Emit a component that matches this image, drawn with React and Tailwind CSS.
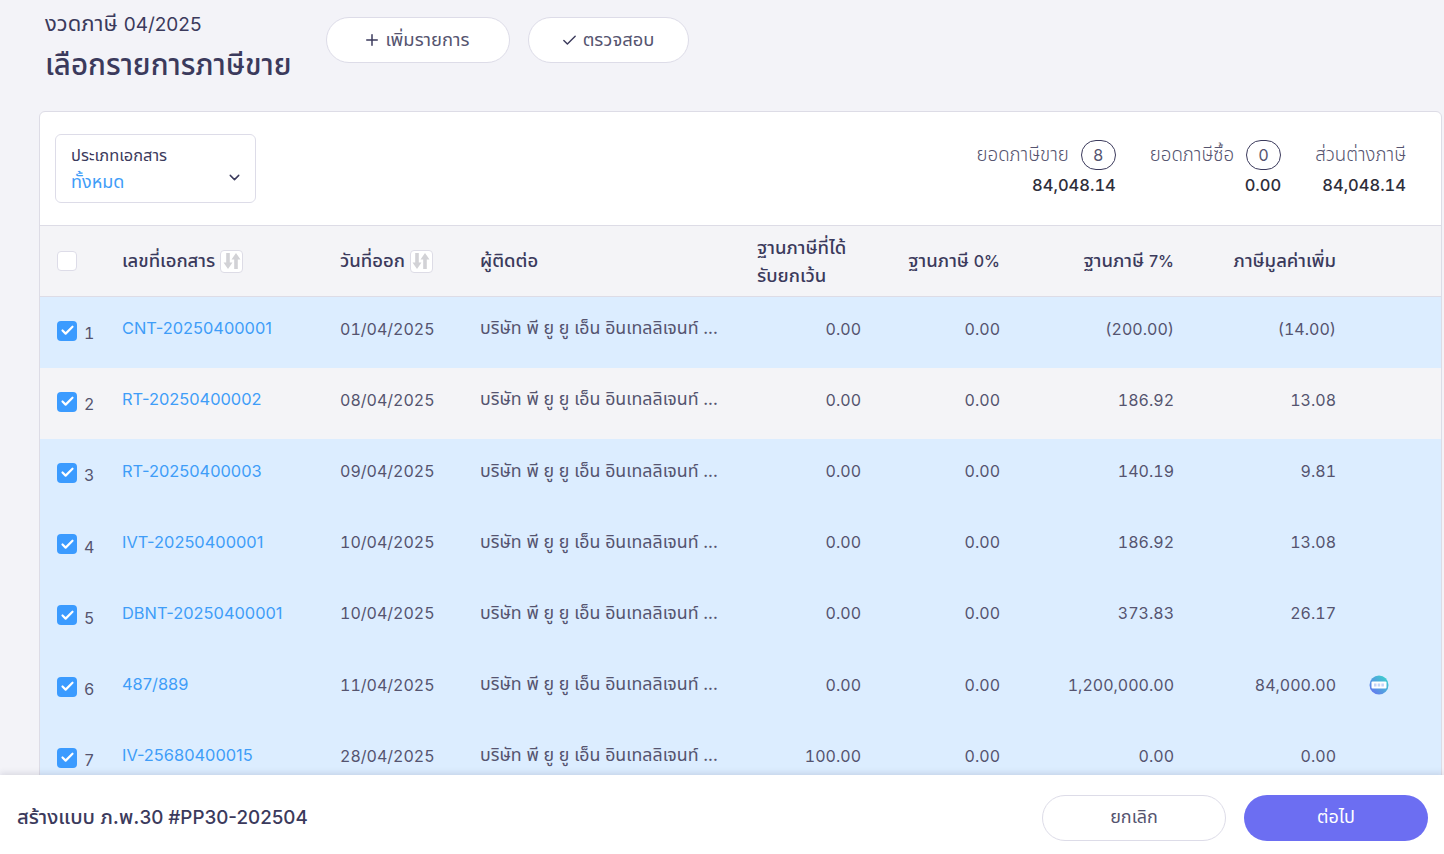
import { Check, ChevronDown, Plus } from "lucide-react";

const FONT = "font-['Inter','Noto_Sans_Thai',sans-serif]";
const COLS = "grid grid-cols-[82px_218px_140px_277px_104px_139px_174px_162px_1fr]";
const CONTACT = "บริษัท พี ยู ยู เอ็น อินเทลลิเจนท์ ...";

const rows = [
    { no: 1, doc: "CNT-20250400001", date: "01/04/2025", exempt: "0.00", zero: "0.00", base: "(200.00)", vat: "(14.00)", on: true },
    { no: 2, doc: "RT-20250400002", date: "08/04/2025", exempt: "0.00", zero: "0.00", base: "186.92", vat: "13.08", on: false },
    { no: 3, doc: "RT-20250400003", date: "09/04/2025", exempt: "0.00", zero: "0.00", base: "140.19", vat: "9.81", on: true },
    { no: 4, doc: "IVT-20250400001", date: "10/04/2025", exempt: "0.00", zero: "0.00", base: "186.92", vat: "13.08", on: true },
    { no: 5, doc: "DBNT-20250400001", date: "10/04/2025", exempt: "0.00", zero: "0.00", base: "373.83", vat: "26.17", on: true },
    { no: 6, doc: "487/889", date: "11/04/2025", exempt: "0.00", zero: "0.00", base: "1,200,000.00", vat: "84,000.00", on: true, badge: true },
    { no: 7, doc: "IV-25680400015", date: "28/04/2025", exempt: "100.00", zero: "0.00", base: "0.00", vat: "0.00", on: true },
];

const SortIcon = () => (
    <span className="ml-[5px] flex h-[23px] w-[23px] shrink-0 items-center justify-center rounded-[4px] border border-[#dddce6] bg-white">
        <svg width="18" height="16" viewBox="0 0 18 16" fill="#d2d2d6">
            <path d="M3.2 0h3.600v9.500H9.500L5 16 .5 9.500h2.700z" />
            <path d="M11.200 16h3.600V6.500h2.700L13 0 8.500 6.500h2.700z" />
        </svg>
    </span>
);

const Badge = () => (
    <svg width="20" height="20" viewBox="0 0 20 20">
        <defs>
            <linearGradient id="badgeFill" x1="0" y1="1" x2="1" y2="0">
                <stop offset="0" stopColor="#6a6cf4" />
                <stop offset="1" stopColor="#38dcc8" />
            </linearGradient>
        </defs>
        <circle cx="10" cy="10" r="9.500" fill="url(#badgeFill)" />
        <rect x="2.500" y="6.500" width="15" height="7" rx="1" fill="#fff" />
        <rect x="5" y="8.500" width="2.500" height="3" fill="#c4d4f8" />
        <rect x="8.700" y="8.500" width="2.500" height="3" fill="#c4d4f8" />
        <rect x="12.400" y="8.500" width="2.500" height="3" fill="#c4d4f8" />
    </svg>
);

const Counter = ({ value }) => (
    <span className="flex h-[30px] w-[35px] items-center justify-center rounded-full border border-[#3b3a5c] text-[16px] text-[#55546f]">
        {value}
    </span>
);

const Row = ({ r }) => (
    <div className={`${COLS} h-[71.2px] items-center pb-[8px] text-[16px] tabular-nums text-[#55546f] ${r.on ? "bg-[#dcedff]" : "bg-[#f4f4f7]"}`}>
        <div className="flex items-center pl-[17px] pt-[4px]">
            <span className="flex h-5 w-5 items-center justify-center rounded-[4px] bg-[#3b9bff]">
                <Check size={15} strokeWidth={3.5} className="text-white" />
            </span>
            <span className="ml-[7px] pt-[5px]">{r.no}</span>
        </div>
        <div className="text-[16.4px] text-[#3f9df8] [font-variant-numeric:normal]">{r.doc}</div>
        <div>{r.date}</div>
        <div className="whitespace-nowrap text-[17.8px]">{CONTACT}</div>
        <div className="text-right">{r.exempt}</div>
        <div className="text-right">{r.zero}</div>
        <div className="text-right">{r.base}</div>
        <div className="text-right">{r.vat}</div>
        <div className="pl-[33px]">{r.badge && <Badge />}</div>
    </div>
);

const App = () => {
    return (
        <div className={`${FONT} flex h-[854px] w-[1444px] flex-col overflow-hidden bg-[#f3f3f8] text-[#3b3a5c]`}>
            <div className="min-h-0 flex-1 overflow-hidden">
                {/* page head */}
                <div className="flex h-[111px] items-start pl-[45px]">
                    <div className="w-[281px]">
                        <div className="pt-[9px] text-[22px] leading-[28px]">งวดภาษี <span className="text-[19px]">04/2025</span></div>
                        <h1 className="mt-[5px] text-[29.5px] font-medium leading-[40px]">เลือกรายการภาษีขาย</h1>
                    </div>
                    <div className="mt-[17px] flex gap-[18px]">
                        <button className="flex h-[46px] w-[184px] items-center justify-center gap-[5px] rounded-full border border-[#dddce8] bg-white pr-[4px] text-[18.4px] text-[#55546f]">
                            <Plus size={18} strokeWidth={2} className="text-[#3b3a5c]" />
                            เพิ่มรายการ
                        </button>
                        <button className="flex h-[46px] w-[161px] items-center justify-center gap-[5px] rounded-full border border-[#dddce8] bg-white pr-[2px] text-[18.4px] text-[#55546f]">
                            <Check size={17} strokeWidth={2} className="text-[#3b3a5c]" />
                            ตรวจสอบ
                        </button>
                    </div>
                </div>

                {/* card */}
                <div className="ml-[39px] w-[1403px] overflow-hidden rounded-t-[6px] border border-[#dddce6] bg-white">
                    <div className="flex h-[113px] items-start justify-between pl-[15px] pr-[35px] pt-[22px]">
                        <div className="relative h-[69px] w-[201px] rounded-[6px] border border-[#dddce8] pl-[15px] pt-[9px]">
                            <div className="text-[16.4px] leading-[22px]">ประเภทเอกสาร</div>
                            <div className="mt-[4px] text-[18px] leading-[24px] text-[#3f9df8]">ทั้งหมด</div>
                            <ChevronDown size={17} className="absolute right-[12px] top-[34px]" />
                        </div>
                        <div className="flex items-start gap-[34px] pt-[6px]">
                            <div className="flex flex-col items-end">
                                <div className="flex items-center gap-3 text-[#55546f]">
                                    <span className="text-[18.7px] font-light">ยอดภาษีขาย</span>
                                    <Counter value="8" />
                                </div>
                                <div className="mt-[3px] text-[16.5px] font-medium tabular-nums leading-[24px] text-[#2e2e3a]">84,048.14</div>
                            </div>
                            <div className="flex flex-col items-end">
                                <div className="flex items-center gap-3 text-[#55546f]">
                                    <span className="text-[18.7px] font-light">ยอดภาษีซื้อ</span>
                                    <Counter value="0" />
                                </div>
                                <div className="mt-[3px] text-[16.5px] font-medium tabular-nums leading-[24px] text-[#2e2e3a]">0.00</div>
                            </div>
                            <div className="flex flex-col items-end">
                                <div className="flex h-[30px] items-center text-[18.7px] font-light text-[#55546f]">ส่วนต่างภาษี</div>
                                <div className="mt-[3px] text-[16.5px] font-medium tabular-nums leading-[24px] text-[#2e2e3a]">84,048.14</div>
                            </div>
                        </div>
                    </div>

                    {/* table head */}
                    <div className={`${COLS} h-[72px] items-center border-y border-[#dddce6] bg-[#f4f4f7] text-[18.5px] font-medium`}>
                        <div className="pl-[17px]">
                            <span className="block h-5 w-5 rounded-[4px] border border-[#dddce8] bg-white" />
                        </div>
                        <div className="flex items-center">เลขที่เอกสาร<SortIcon /></div>
                        <div className="flex items-center">วันที่ออก<SortIcon /></div>
                        <div>ผู้ติดต่อ</div>
                        <div className="whitespace-nowrap leading-[28px]">ฐานภาษีที่ได้<br />รับยกเว้น</div>
                        <div className="text-right">ฐานภาษี <span className="text-[16px]">0%</span></div>
                        <div className="text-right">ฐานภาษี <span className="text-[16px]">7%</span></div>
                        <div className="text-right">ภาษีมูลค่าเพิ่ม</div>
                        <div />
                    </div>

                    {rows.map((r) => (
                        <Row key={r.no} r={r} />
                    ))}
                </div>
            </div>

            {/* footer */}
            <div className="relative z-10 flex h-[79px] shrink-0 items-center justify-between bg-white pl-[17px] pr-4 pt-[7px] shadow-[0_-2px_6px_rgba(59,58,92,0.14)]">
                <div className="-mt-[1px] text-[20.3px] font-medium">สร้างแบบ ภ.พ.<span className="text-[18.8px]">30 #PP30-202504</span></div>
                <div className="flex gap-[18px]">
                    <button className="h-[46px] w-[184px] rounded-full border border-[#dddce8] bg-white pb-[3px] text-[18px] text-[#55546f]">ยกเลิก</button>
                    <button className="h-[46px] w-[184px] rounded-full bg-[#6c6ef2] pb-[3px] text-[18px] text-white">ต่อไป</button>
                </div>
            </div>
        </div>
    );
};

export default App;
